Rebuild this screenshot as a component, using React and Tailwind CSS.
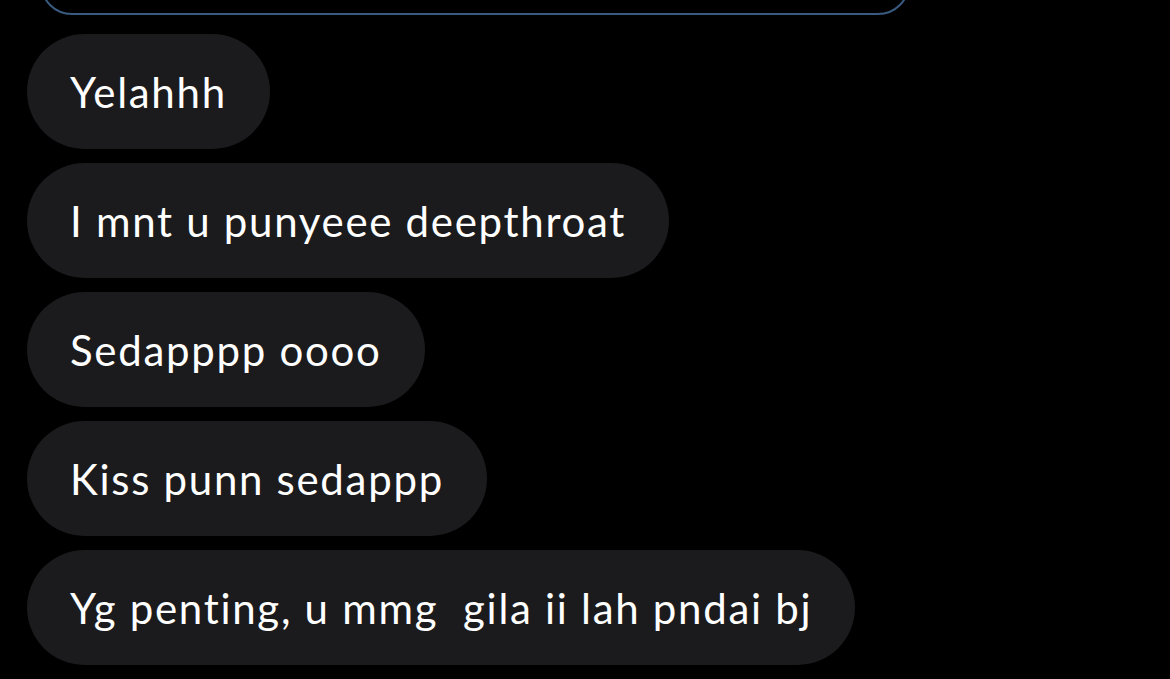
const messages = [
  'Yelahhh',
  'I mnt u punyeee deepthroat',
  'Sedapppp oooo',
  'Kiss punn sedappp',
  'Yg penting, u mmg  gila ii lah pndai bj',
]

const Bubble = ({ text }) => (
  <div className="self-start flex items-center h-[115px] px-[43px] rounded-full bg-[#1b1b1d]">
    <span className="text-white text-[42px] leading-none tracking-[1.7px] whitespace-pre [font-variant-ligatures:none]">
      {text}
    </span>
  </div>
)

export default function App() {
  return (
    <div
      className="w-[1170px] h-[679px] bg-black overflow-hidden flex flex-col"
      style={{ fontFamily: 'Lato, "Open Sans", sans-serif' }}
    >
      {/* quoted message box, cut off at the top */}
      <div className="ml-[40px] mt-[-60px] w-[870px] h-[75px] shrink-0 rounded-[32px] border-2 border-[#3a5b80]" />

      <div className="flex flex-col gap-[14px] pl-[27px] mt-[19px]">
        {messages.map((m) => (
          <Bubble key={m} text={m} />
        ))}
      </div>
    </div>
  )
}
